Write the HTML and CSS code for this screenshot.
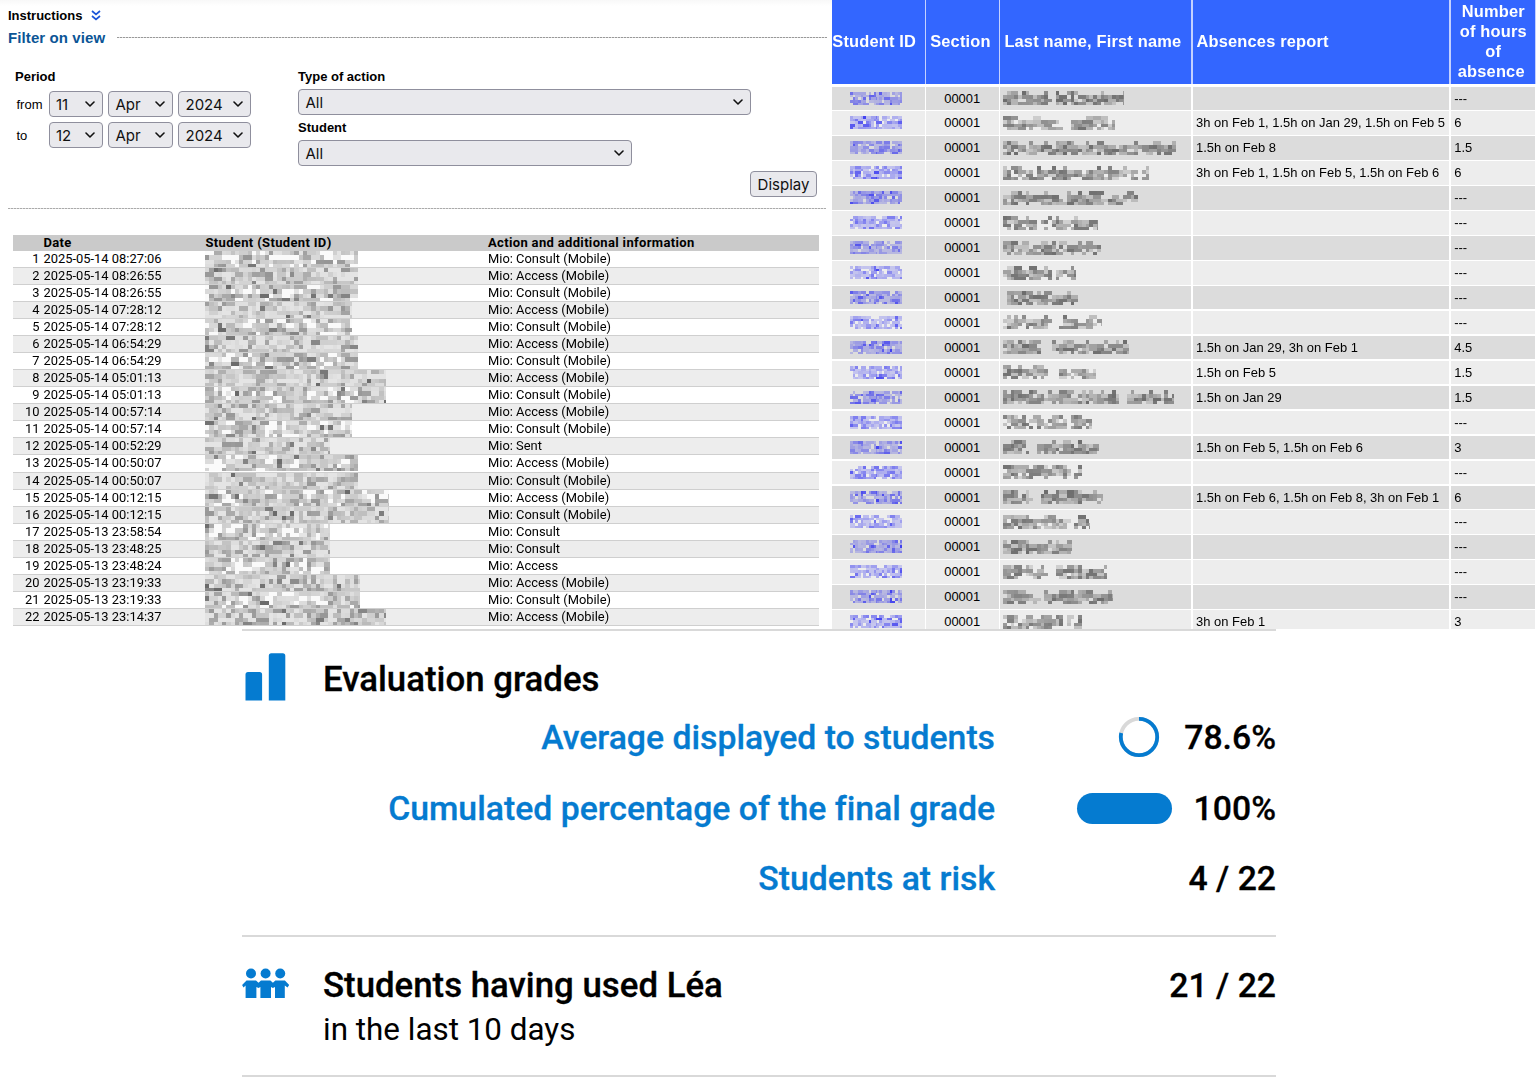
FILE: index.html
```html
<!DOCTYPE html>
<html lang="en">
<head>
<meta charset="utf-8">
<title>Léa – Class follow-up</title>
<link rel="stylesheet" href="styles.css">
</head>
<body>
<svg class="defs" width="0" height="0"><symbol id="chev" viewBox="0 0 10 6"><path d="M1 1l4 4 4-4" fill="none" stroke="#111" stroke-width="1.6" stroke-linecap="round" stroke-linejoin="round"/></symbol></svg>
<main class="page">
  <div class="top">
    <section class="activity">
      <div class="instructions">Instructions
        <svg width="10" height="11" viewBox="0 0 10 11"><path d="M1 1l4 3.4L9 1M1 6l4 3.4L9 6" fill="none" stroke="#1b55d8" stroke-width="1.7"/></svg>
      </div>
      <div class="filter-title"><h2>Filter on view</h2><i class="dots"></i></div>
      <form class="filter">
        <div class="period">
          <b class="label">Period</b>
          <div class="date-row"><span class="word">from</span><span class="select day">11<svg><use href="#chev"/></svg></span><span class="select month">Apr<svg><use href="#chev"/></svg></span><span class="select year">2024<svg><use href="#chev"/></svg></span></div>
          <div class="date-row"><span class="word">to</span><span class="select day">12<svg><use href="#chev"/></svg></span><span class="select month">Apr<svg><use href="#chev"/></svg></span><span class="select year">2024<svg><use href="#chev"/></svg></span></div>
        </div>
        <div class="criteria">
          <b class="label">Type of action</b>
          <span class="select action">All<svg><use href="#chev"/></svg></span>
          <b class="label">Student</b>
          <span class="select student">All<svg><use href="#chev"/></svg></span>
          <button type="button" class="display">Display</button>
        </div>
      </form>
      <i class="dots full"></i>
      <div class="log" id="log">
        <div class="log-head"><span></span><span>Date</span><span>Student (Student ID)</span><span>Action and additional information</span></div>
      </div>
    </section>
    <section class="absences" id="absences">
      <div class="abs-head"><span class="c-id">Student ID</span><span>Section</span><span>Last name, First name</span><span>Absences report</span><span class="c-num"><em>Number</em><em>of hours</em><em>of</em><em class="last">absence</em></span></div>
    </section>
  </div>
  <div class="stats">
    <section class="block grades">
      <div class="title-row">
        <svg class="icon" width="48" height="50" viewBox="0 0 48 50"><path d="M3.5 46.500V20.500q0-2.500 2.500-2.500h11.600q2.500 0 2.500 2.500V46.500zM26.800 46.500V1.700q0-2.500 2.500-2.500H40.800q2.500 0 2.500 2.500V46.500z" fill="#057bd0"/></svg>
        <h3>Evaluation grades</h3>
      </div>
      <div class="metric m-avg"><span class="name">Average displayed to students</span><span class="gauge"><svg width="42" height="42" viewBox="0 0 42 42"><circle cx="21" cy="21" r="18.200" fill="none" stroke="#d9d9d9" stroke-width="3.800"/><circle cx="21" cy="21" r="18.200" fill="none" stroke="#057bd0" stroke-width="3.800" pathLength="100" stroke-dasharray="78.600 100" transform="rotate(-90 21 21)"/></svg></span><span class="value">78.6%</span></div>
      <div class="metric m-cum"><span class="name">Cumulated percentage of the final grade</span><span class="gauge"><i class="pill"></i></span><span class="value">100%</span></div>
      <div class="metric m-risk"><span class="name">Students at risk</span><span class="gauge"></span><span class="value">4 / 22</span></div>
    </section>
    <section class="block usage">
      <div class="title-row">
        <svg class="icon" width="48" height="50" viewBox="0 0 48 50"><g fill="#057bd0" transform="translate(0 -1.500)"><circle cx="9" cy="15" r="5"/><circle cx="23.600" cy="15" r="5"/><circle cx="38.200" cy="15" r="5"/><path d="M4.500 22H14l2.500 2.300L19 22h9.400l2.500 2.300 2.500-2.300h9.500l4.300 4.600-1.700 2.300-2.700-1.900V39.500H33V28.500l-2.100.900-1.900-.9V39.500H18.400V28.500l-1.900.9-2.100-.9V39.500H3.600V27l-2.100 1.900L.1 26.600z"/></g></svg>
        <h3>Students having used Léa</h3><span class="value">21 / 22</span>
      </div>
      <p class="sub">in the last 10 days</p>
    </section>
  </div>
</main>
<script src="app.js"></script>
</body>
</html>
```
FILE: styles.css
```css
* { box-sizing: border-box; }
body { margin: 0; background: #fff; color: #000; font-family: "Liberation Sans", Arial, sans-serif; font-size: 13px; }
h2, h3, p { margin: 0; }
.defs { display: block; height: 0; }
.page { width: 1536px; height: 1080px; overflow: hidden; }
.top { display: flex; height: 629px; overflow: hidden; }

/* activity log panel */
.activity { width: 831.500px; flex: none; background: linear-gradient(#f8f8f8, #fff 6px); }
.instructions { display: flex; align-items: center; gap: 9px; height: 16px; margin: 7px 0 0 8px; font-weight: 700; }
.filter-title { display: flex; align-items: center; height: 28px; margin: 0 5px 0 8px; gap: 12px; }
.filter-title h2 { font-size: 15px; color: #0b5596; letter-spacing: .1px; }
.dots { flex: 1; height: 1px; background: repeating-linear-gradient(90deg, #999 0 2px, #ddd 2px 3px); }
.filter { display: flex; height: 156px; padding: 18px 0 0 15px; }
.period { width: 283px; }
.label { display: block; height: 16px; line-height: 16px; }
.period .label { margin-bottom: 6px; }
.date-row { display: flex; align-items: center; gap: 5.500px; margin-bottom: 5px; }
.word { width: 28px; padding-left: 1.500px; }
.select, .display { display: flex; align-items: center; height: 26px; border: 1px solid #8f8f9d; border-radius: 4px; background: #e9e9ed; font: 15px Inter, sans-serif; color: #111; }
.select { justify-content: space-between; padding: 0 7px 0 6.500px; }
.select svg { width: 10px; height: 6px; }
.day { width: 54px; }
.month { width: 64.500px; }
.year { width: 72.500px; }
.criteria { display: flex; flex-direction: column; width: 519px; }
.criteria .label { margin-bottom: 4px; }
.action { width: 453px; margin-bottom: 5px; }
.student { width: 333.500px; }
.display { align-self: flex-end; width: 67px; margin-top: 5px; justify-content: center; padding: 0; }
.full { display: block; margin: 1px 5.500px 0 8px; background: repeating-linear-gradient(90deg, #aaa 0 2px, #ddd 2px 3px); }
.log { width: 806px; margin: 26px 0 0 13px; font-family: Roboto, sans-serif; }
.log-head, .log-row { display: grid; }
.log-head { grid-template-columns: 30.500px 162px 282.500px 1fr; height: 15.500px; line-height: 15px; background: #cacaca; font-weight: 700; letter-spacing: .34px; }
.log-row { grid-template-columns: 26.500px 4px 161.500px 283px 1fr; height: 17.090px; line-height: 16px; border-bottom: 1px solid #cfcfcf; font-size: 12.900px; }
.log-row:nth-child(odd) { background: #ededed; }
.log-row .n { text-align: right; }
.log-row canvas, .abs-row canvas { display: block; }

/* absences table */
.absences { width: 704px; flex: none; }
.abs-head, .abs-row { display: grid; grid-template-columns: 93px 72.500px 190.500px 256.500px 84px; column-gap: 1.700px; }
.abs-head { height: 85px; padding-bottom: 1px; color: #fff; font-size: 16.400px; letter-spacing: .18px; font-weight: 700; line-height: 20px; background: #c4d1ff; background-clip: content-box; }
.abs-head span { display: flex; align-items: center; background: #36f; padding: 0 0 3px 4px; }
.abs-head .c-id { padding-left: .8px; }
.abs-head .c-num { flex-direction: column; justify-content: center; padding-left: 0; }
.abs-head em { font-style: normal; padding-left: 1px; }
.abs-head .last { padding: 0 3px 0 0; }
.abs-row { height: 24.940px; padding-top: 1.500px; font-size: 12.950px; }
.abs-row > * { display: flex; align-items: center; padding: 0 0 .4px 3.500px; background: #ededed; white-space: nowrap; }
.abs-row:nth-child(even) > * { background: #dcdcdc; }
.abs-row > :nth-child(1) { padding-left: 18.500px; }
.abs-row > :nth-child(2) { padding-left: 18px; }
.abs-row > :nth-child(3) { padding-left: 2.500px; }

/* statistics */
.stats { width: 1034px; margin-left: 242px; font-family: Roboto, sans-serif; font-size: 33.750px; font-weight: 500; white-space: nowrap; -webkit-text-stroke: .3px; }
.block { border-top: 2px solid #d9d9d9; }
.grades { height: 306px; padding-top: 20px; }
.usage { height: 142px; padding-top: 22px; border-bottom: 2px solid #d9d9d9; }
.title-row { display: flex; align-items: center; height: 56px; }
.usage .title-row { height: 52px; }
.icon { width: 48px; margin-right: 33px; flex: none; overflow: visible; }
h3 { font-size: 34.800px; font-weight: 500; }
.value { margin-left: auto; text-align: right; }
.metric { display: grid; grid-template-columns: 753px 176.500px 104.500px; align-items: center; }
.m-avg { height: 60px; }
.m-cum { height: 83px; }
.m-risk { height: 56px; }
.name { color: #057bd0; text-align: right; font-variant-ligatures: none; }
.gauge { display: flex; justify-content: flex-end; align-items: center; }
.m-avg .gauge { padding-right: 12px; }
.pill { width: 94.500px; height: 31.500px; border-radius: 16px; background: #057bd0; }
.sub { padding-left: 81px; font-size: 31.400px; font-weight: 400; line-height: 38px; -webkit-text-stroke: 0; }
```
FILE: app.js
```js
// Activity log: date, student cell width, action
const log = [
  ["2025-05-14 08:27:06", 153, "Mio: Consult (Mobile)"],
  ["2025-05-14 08:26:55", 153, "Mio: Access (Mobile)"],
  ["2025-05-14 08:26:55", 153, "Mio: Consult (Mobile)"],
  ["2025-05-14 07:28:12", 147, "Mio: Access (Mobile)"],
  ["2025-05-14 07:28:12", 147, "Mio: Consult (Mobile)"],
  ["2025-05-14 06:54:29", 153, "Mio: Access (Mobile)"],
  ["2025-05-14 06:54:29", 153, "Mio: Consult (Mobile)"],
  ["2025-05-14 05:01:13", 181, "Mio: Access (Mobile)"],
  ["2025-05-14 05:01:13", 181, "Mio: Consult (Mobile)"],
  ["2025-05-14 00:57:14", 147, "Mio: Access (Mobile)"],
  ["2025-05-14 00:57:14", 147, "Mio: Consult (Mobile)"],
  ["2025-05-14 00:52:29", 125, "Mio: Sent"],
  ["2025-05-14 00:50:07", 153, "Mio: Access (Mobile)"],
  ["2025-05-14 00:50:07", 153, "Mio: Consult (Mobile)"],
  ["2025-05-14 00:12:15", 184, "Mio: Access (Mobile)"],
  ["2025-05-14 00:12:15", 184, "Mio: Consult (Mobile)"],
  ["2025-05-13 23:58:54", 125, "Mio: Consult"],
  ["2025-05-13 23:48:25", 125, "Mio: Consult"],
  ["2025-05-13 23:48:24", 125, "Mio: Access"],
  ["2025-05-13 23:19:33", 155, "Mio: Access (Mobile)"],
  ["2025-05-13 23:19:33", 155, "Mio: Consult (Mobile)"],
  ["2025-05-13 23:14:37", 181, "Mio: Access (Mobile)"]
];
// Absences: masked name width, gap start, gap width, report, hours
const absences = [
  [121, 45, 8, "", "---"],
  [112, 56, 10, "3h on Feb 1, 1.5h on Jan 29, 1.5h on Feb 5", "6"],
  [173, 112, 4, "1.5h on Feb 8", "1.5"],
  [146, 134, 5, "3h on Feb 1, 1.5h on Feb 5, 1.5h on Feb 6", "6"],
  [135, 101, 5, "", "---"],
  [95, 34, 4, "", "---"],
  [98, 45, 4, "", "---"],
  [73, 47, 4, "", "---"],
  [75, 0, 4, "", "---"],
  [99, 46, 9, "", "---"],
  [126, 38, 9, "1.5h on Jan 29, 3h on Feb 1", "4.5"],
  [93, 46, 11, "1.5h on Feb 5", "1.5"],
  [171, 117, 6, "1.5h on Jan 29", "1.5"],
  [89, 63, 5, "", "---"],
  [96, 26, 7, "1.5h on Feb 5, 1.5h on Feb 6", "3"],
  [79, 67, 5, "", "---"],
  [100, 26, 10, "1.5h on Feb 6, 1.5h on Feb 8, 3h on Feb 1", "6"],
  [87, 63, 7, "", "---"],
  [69, 30, 4, "", "---"],
  [104, 45, 5, "", "---"],
  [110, 34, 8, "", "---"],
  [79, 58, 5, "3h on Feb 1", "3"]
];

let seed = 7;
const rnd = () => (seed = (seed * 16807) % 2147483647) / 2147483647;

// Pixelated mask hiding personal data
function mosaic(w, h, size, pick) {
  const c = document.createElement("canvas");
  c.width = w; c.height = h;
  const g = c.getContext("2d");
  const rows = Math.ceil(h / size);
  for (let y = 0; y < rows; y++) {
    for (let x = 0; x < w; x += size) {
      const run = rnd() < 0.3 ? 2 : 1;
      const color = pick(x, y, rows);
      if (color) {
        g.fillStyle = color;
        g.fillRect(Math.round(x), Math.round(y * size), Math.round(x + size * run) - Math.round(x), Math.round((y + 1) * size) - Math.round(y * size));
        if (run === 2) x += size;
      }
    }
  }
  return c;
}
const cell = (row, text, cls) => {
  const s = document.createElement("span");
  if (text instanceof Node) s.append(text); else s.textContent = text;
  if (cls) s.className = cls;
  row.append(s);
};

log.forEach(([date, width, action], i) => {
  const row = document.createElement("div");
  row.className = "log-row";
  cell(row, i + 1, "n"); cell(row, ""); cell(row, date);
  cell(row, mosaic(width, 16, 4.25, () => {
    const r = rnd();
    const v = r < 0.04 ? 105 + rnd() * 35 : r < 0.22 ? 150 + rnd() * 30 : r < 0.84 ? 185 + rnd() * 45 : (i % 2 ? 228 : 250);
    return `rgb(${v},${v},${v})`;
  }));
  cell(row, action);
  document.getElementById("log").append(row);
});

absences.forEach(([width, gapAt, gap, report, hours]) => {
  const row = document.createElement("div");
  row.className = "abs-row";
  cell(row, mosaic(52, 13, 2.65, () => {
    if (rnd() < 0.18) return null;
    return `rgba(50,50,240,${0.2 + rnd() * rnd() * 0.75})`;
  }));
  cell(row, "00001");
  cell(row, mosaic(width, 14, 3.75, (x, y, rows) => {
    if (x >= gapAt - 1 && x < gapAt + gap - 1) return null;
    if (rnd() < (y === 0 ? (x < 12 ? 0.2 : 0.65) : y === rows - 1 ? 0.3 : 0.12)) return null;
    return `rgba(60,60,60,${0.15 + rnd() * 0.55})`;
  }));
  cell(row, report);
  cell(row, hours);
  document.getElementById("absences").append(row);
});
```
